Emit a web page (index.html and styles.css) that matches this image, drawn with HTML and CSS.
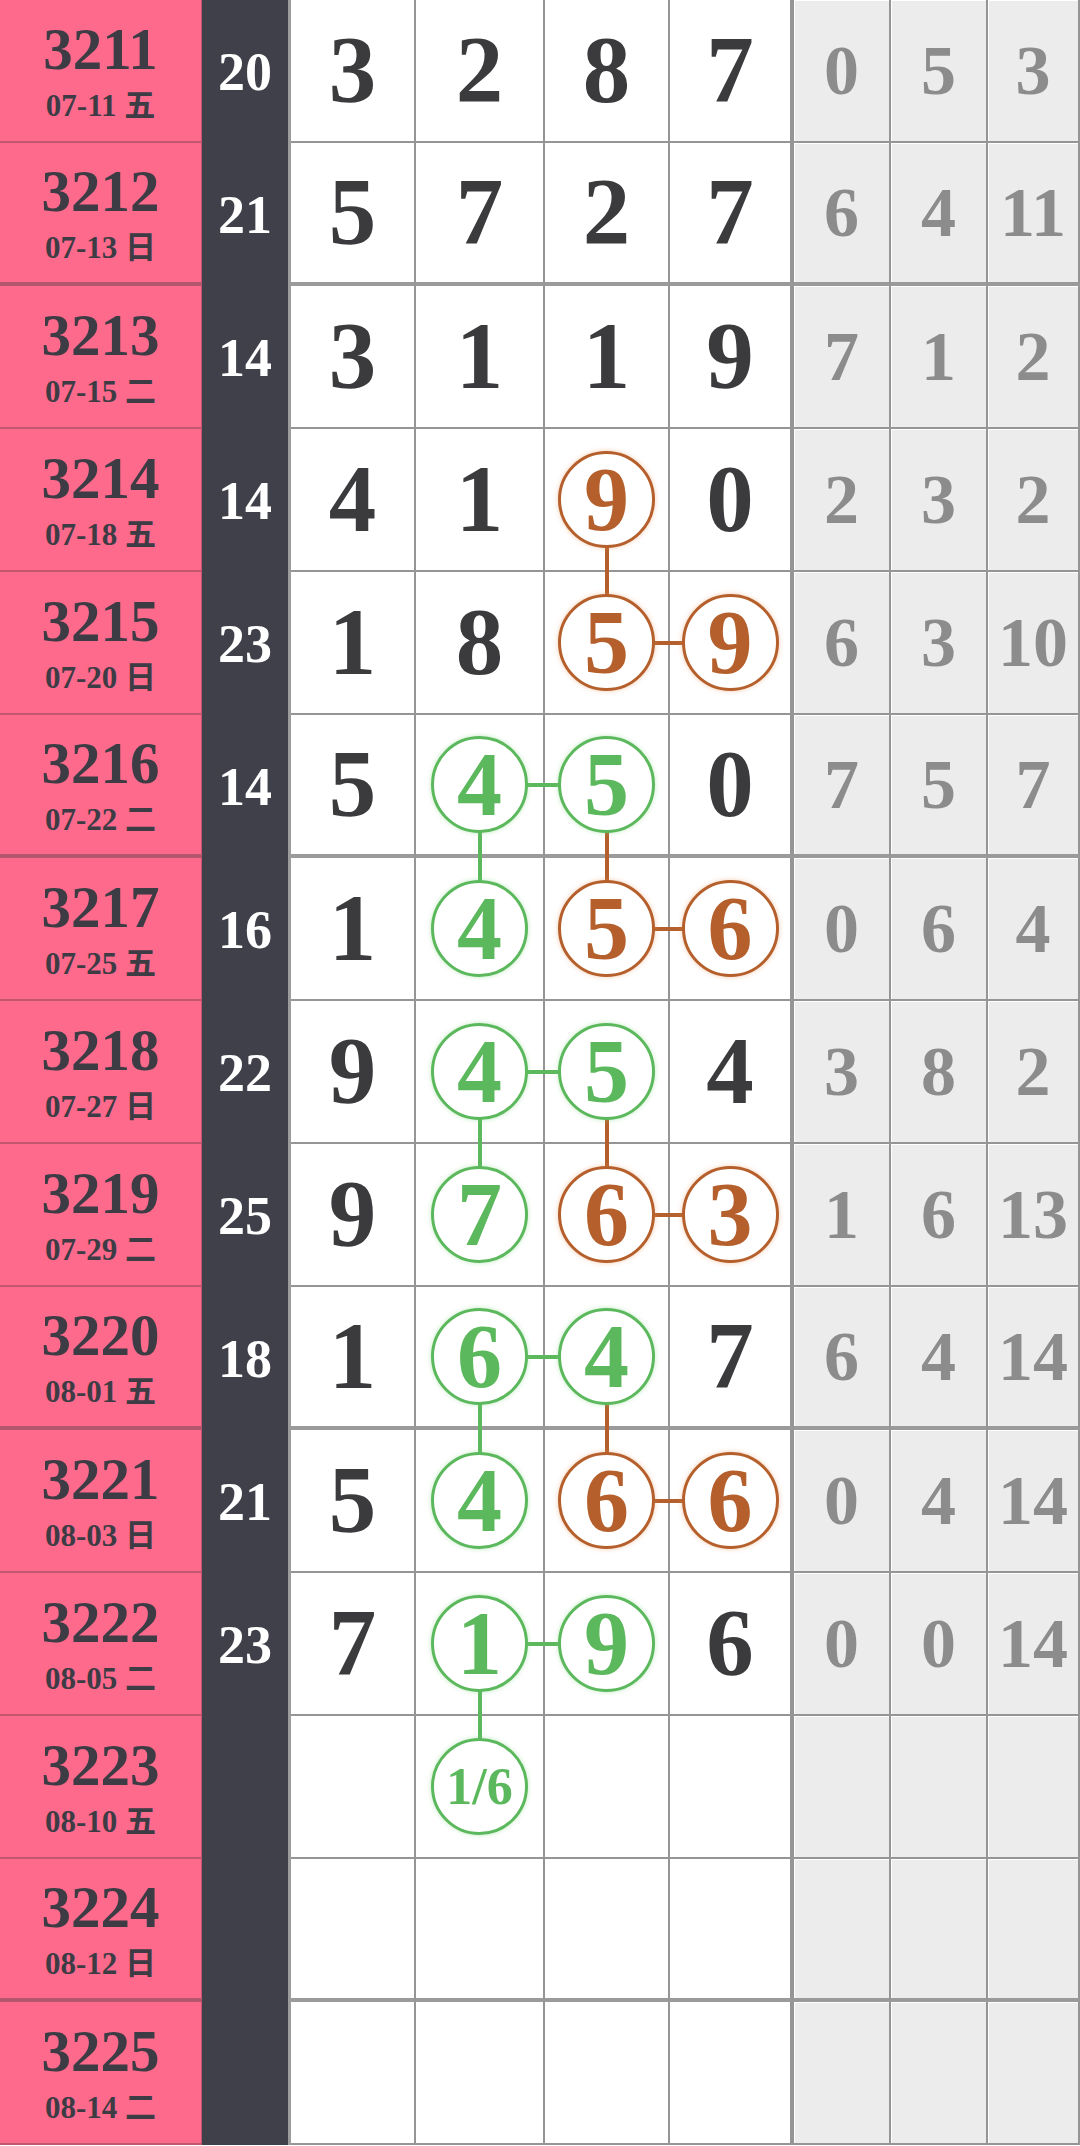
FILE: index.html
```html
<!DOCTYPE html>
<html lang="zh">
<head>
<meta charset="utf-8">
<title>走势图</title>
<link rel="stylesheet" href="styles.css">
</head>
<body>
<div class="chart">
  <div class="row">
    <div class="cell issue"><span class="no">3211</span><span class="date">07-11 五</span></div>
    <div class="cell sum">20</div>
    <div class="cell d">3</div><div class="cell d">2</div><div class="cell d">8</div><div class="cell d last">7</div>
    <div class="cell miss">0</div><div class="cell miss">5</div><div class="cell miss">3</div>
  </div>
  <div class="row thick">
    <div class="cell issue"><span class="no">3212</span><span class="date">07-13 日</span></div>
    <div class="cell sum">21</div>
    <div class="cell d">5</div><div class="cell d">7</div><div class="cell d">2</div><div class="cell d last">7</div>
    <div class="cell miss">6</div><div class="cell miss">4</div><div class="cell miss">11</div>
  </div>
  <div class="row">
    <div class="cell issue"><span class="no">3213</span><span class="date">07-15 二</span></div>
    <div class="cell sum">14</div>
    <div class="cell d">3</div><div class="cell d">1</div><div class="cell d">1</div><div class="cell d last">9</div>
    <div class="cell miss">7</div><div class="cell miss">1</div><div class="cell miss">2</div>
  </div>
  <div class="row">
    <div class="cell issue"><span class="no">3214</span><span class="date">07-18 五</span></div>
    <div class="cell sum">14</div>
    <div class="cell d">4</div><div class="cell d">1</div><div class="cell d down-o"><span class="ball org">9</span></div><div class="cell d last">0</div>
    <div class="cell miss">2</div><div class="cell miss">3</div><div class="cell miss">2</div>
  </div>
  <div class="row">
    <div class="cell issue"><span class="no">3215</span><span class="date">07-20 日</span></div>
    <div class="cell sum">23</div>
    <div class="cell d">1</div><div class="cell d">8</div><div class="cell d right-o"><span class="ball org">5</span></div><div class="cell d last"><span class="ball org">9</span></div>
    <div class="cell miss">6</div><div class="cell miss">3</div><div class="cell miss">10</div>
  </div>
  <div class="row thick">
    <div class="cell issue"><span class="no">3216</span><span class="date">07-22 二</span></div>
    <div class="cell sum">14</div>
    <div class="cell d">5</div><div class="cell d right-g down-g"><span class="ball grn">4</span></div><div class="cell d down-o"><span class="ball grn">5</span></div><div class="cell d last">0</div>
    <div class="cell miss">7</div><div class="cell miss">5</div><div class="cell miss">7</div>
  </div>
  <div class="row">
    <div class="cell issue"><span class="no">3217</span><span class="date">07-25 五</span></div>
    <div class="cell sum">16</div>
    <div class="cell d">1</div><div class="cell d"><span class="ball grn">4</span></div><div class="cell d right-o"><span class="ball org">5</span></div><div class="cell d last"><span class="ball org">6</span></div>
    <div class="cell miss">0</div><div class="cell miss">6</div><div class="cell miss">4</div>
  </div>
  <div class="row">
    <div class="cell issue"><span class="no">3218</span><span class="date">07-27 日</span></div>
    <div class="cell sum">22</div>
    <div class="cell d">9</div><div class="cell d right-g down-g"><span class="ball grn">4</span></div><div class="cell d down-o"><span class="ball grn">5</span></div><div class="cell d last">4</div>
    <div class="cell miss">3</div><div class="cell miss">8</div><div class="cell miss">2</div>
  </div>
  <div class="row">
    <div class="cell issue"><span class="no">3219</span><span class="date">07-29 二</span></div>
    <div class="cell sum">25</div>
    <div class="cell d">9</div><div class="cell d"><span class="ball grn">7</span></div><div class="cell d right-o"><span class="ball org">6</span></div><div class="cell d last"><span class="ball org">3</span></div>
    <div class="cell miss">1</div><div class="cell miss">6</div><div class="cell miss">13</div>
  </div>
  <div class="row thick">
    <div class="cell issue"><span class="no">3220</span><span class="date">08-01 五</span></div>
    <div class="cell sum">18</div>
    <div class="cell d">1</div><div class="cell d right-g down-g"><span class="ball grn">6</span></div><div class="cell d down-o"><span class="ball grn">4</span></div><div class="cell d last">7</div>
    <div class="cell miss">6</div><div class="cell miss">4</div><div class="cell miss">14</div>
  </div>
  <div class="row">
    <div class="cell issue"><span class="no">3221</span><span class="date">08-03 日</span></div>
    <div class="cell sum">21</div>
    <div class="cell d">5</div><div class="cell d"><span class="ball grn">4</span></div><div class="cell d right-o"><span class="ball org">6</span></div><div class="cell d last"><span class="ball org">6</span></div>
    <div class="cell miss">0</div><div class="cell miss">4</div><div class="cell miss">14</div>
  </div>
  <div class="row">
    <div class="cell issue"><span class="no">3222</span><span class="date">08-05 二</span></div>
    <div class="cell sum">23</div>
    <div class="cell d">7</div><div class="cell d right-g down-g"><span class="ball grn">1</span></div><div class="cell d"><span class="ball grn">9</span></div><div class="cell d last">6</div>
    <div class="cell miss">0</div><div class="cell miss">0</div><div class="cell miss">14</div>
  </div>
  <div class="row">
    <div class="cell issue"><span class="no">3223</span><span class="date">08-10 五</span></div>
    <div class="cell sum"></div>
    <div class="cell d"></div><div class="cell d"><span class="ball grn small">1/6</span></div><div class="cell d"></div><div class="cell d last"></div>
    <div class="cell miss"></div><div class="cell miss"></div><div class="cell miss"></div>
  </div>
  <div class="row thick">
    <div class="cell issue"><span class="no">3224</span><span class="date">08-12 日</span></div>
    <div class="cell sum"></div>
    <div class="cell d"></div><div class="cell d"></div><div class="cell d"></div><div class="cell d last"></div>
    <div class="cell miss"></div><div class="cell miss"></div><div class="cell miss"></div>
  </div>
  <div class="row">
    <div class="cell issue"><span class="no">3225</span><span class="date">08-14 二</span></div>
    <div class="cell sum"></div>
    <div class="cell d"></div><div class="cell d"></div><div class="cell d"></div><div class="cell d last"></div>
    <div class="cell miss"></div><div class="cell miss"></div><div class="cell miss"></div>
  </div>
</div>
</body>
</html>
```

FILE: styles.css
```css
html, body {
  margin: 0;
  padding: 0;
  background: #ffffff;
}

body {
  font-family: "Liberation Serif", "Noto Sans CJK SC", serif;
  font-weight: bold;
  overflow: hidden;
}

.chart {
  display: grid;
  grid-template-columns: 202px 89px 125px 129px 125px 124px 97px 97px 92px;
  grid-auto-rows: 143px;
  width: 1080px;
  border-top: 1px solid #c2566f;
  margin-top: -1px;
}

.row {
  display: contents;
}

.cell {
  position: relative;
  box-sizing: border-box;
  display: flex;
  align-items: center;
  justify-content: center;
  line-height: 1;
}

.issue {
  flex-direction: column;
  background: #fd6a8c;
  color: #3d3c45;
  border-bottom: 2px solid #c2566f;
  border-right: 1px solid #c2566f;
}

.no {
  font-size: 59px;
  line-height: 1;
}

.date {
  font-size: 31px;
  line-height: 1;
  margin-top: 11px;
}

.sum {
  background: #40404a;
  color: #ffffff;
  font-size: 54px;
  border-right: 3px solid #9c9c9c;
}

.d {
  background: #ffffff;
  color: #3b3b3d;
  font-size: 95px;
  border-right: 2px solid #959595;
  border-bottom: 2px solid #959595;
}

.d.last {
  border-right-width: 4px;
}

.miss {
  background: #ececec;
  color: #8c8c8c;
  font-size: 70px;
  border-right: 2px solid #959595;
  border-bottom: 2px solid #959595;
  box-shadow: inset 1px 1px 0 #ffffff;
}

.row.thick .issue {
  border-bottom-width: 4px;
  border-bottom-color: #b4566c;
}

.row.thick .d,
.row.thick .miss {
  border-bottom-width: 4px;
  border-bottom-color: #9a9a9a;
}

.ball {
  position: relative;
  z-index: 2;
  box-sizing: border-box;
  width: 97px;
  height: 97px;
  border: 3.5px solid;
  border-radius: 50%;
  background: #ffffff;
  display: flex;
  align-items: center;
  justify-content: center;
  font-size: 90px;
  line-height: 1;
}

.ball.org {
  color: #b5602c;
  border-color: #b5602c;
  box-shadow: 0 0 5px rgba(230, 140, 80, 0.45);
}

.ball.grn {
  color: #5cb85c;
  border-color: #5cb85c;
  box-shadow: 0 0 5px rgba(120, 210, 120, 0.45);
}

.ball.small {
  font-size: 52px;
}

.down-o::after,
.down-g::after {
  content: "";
  position: absolute;
  z-index: 1;
  left: 50%;
  top: 50%;
  width: 4px;
  height: 143px;
  margin-left: -2px;
}

.right-o::before,
.right-g::before {
  content: "";
  position: absolute;
  z-index: 1;
  left: 50%;
  top: 50%;
  width: 128px;
  height: 4px;
  margin-top: -2px;
}

.down-o::after,
.right-o::before {
  background: #b5602c;
}

.down-g::after,
.right-g::before {
  background: #5cb85c;
}
```
